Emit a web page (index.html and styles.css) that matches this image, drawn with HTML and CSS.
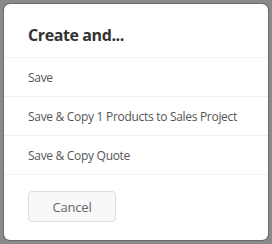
FILE: index.html
```html
<!DOCTYPE html>
<html>
<head>
  <title>Create and...</title>
  <link rel="stylesheet" href="styles.css">
</head>
<body>
  <div class="dialog">
    <div class="dialog-header">Create and...</div>
    <div class="option">Save</div>
    <div class="option">Save &amp; Copy 1 Products to Sales Project</div>
    <div class="option">Save &amp; Copy Quote</div>
    <div class="dialog-footer">
      <button class="btn-cancel">Cancel</button>
    </div>
  </div>
</body>
</html>
```

FILE: styles.css
```css
body {
  margin: 0;
  padding: 4px;
  background: #8a8a8a;
  font-family: 'Open Sans', 'Noto Sans', sans-serif;
}

.dialog {
  width: 264px;
  height: 236px;
  background: #fff;
  border-radius: 6px;
  box-shadow: 0 0 0 1px #6a6a6a;
  box-sizing: border-box;
  overflow: hidden;
}

.dialog-header {
  height: 54px;
  padding: 20px 24px 0;
  font-size: 16px;
  line-height: 22px;
  font-weight: 700;
  letter-spacing: -0.4px;
  color: #333;
  border-bottom: 1px solid #f2f2f2;
  box-sizing: border-box;
}

.option {
  height: 39px;
  padding: 0 24px;
  display: flex;
  align-items: center;
  font-size: 12px;
  letter-spacing: -0.3px;
  white-space: nowrap;
  color: #555;
  border-bottom: 1px solid #f2f2f2;
  box-sizing: border-box;
}

.dialog-footer {
  padding: 16px 24px;
}

.btn-cancel {
  width: 88px;
  height: 31px;
  background: #f7f8f9;
  border: 1px solid #dcdee0;
  border-radius: 4px;
  font-family: inherit;
  font-size: 13px;
  letter-spacing: -0.2px;
  color: #666;
}
```
